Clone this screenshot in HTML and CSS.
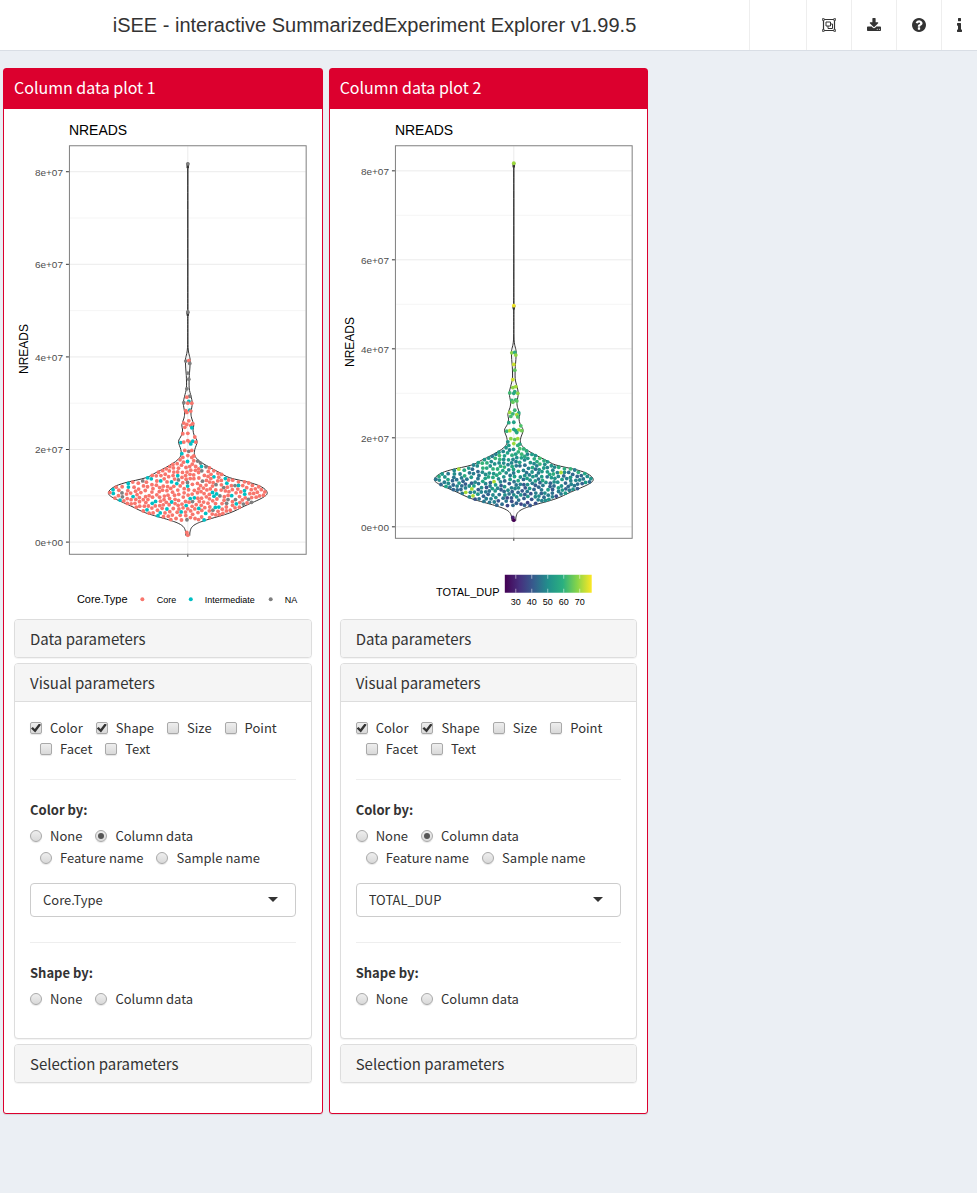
FILE: index.html
```html
<!DOCTYPE html>
<html lang="en">
<head>
<meta charset="utf-8">
<title>iSEE</title>
<link rel="stylesheet" href="styles.css">
</head>
<body>
<header class="topbar">
  <h1 class="brand">iSEE - interactive SummarizedExperiment Explorer v1.99.5</h1>
  <nav class="tools">
    <span class="tool-blank"></span>
    <button class="tool" type="button" aria-label="Organize panels">
      <svg width="14" height="14" viewBox="0 0 14 14" fill="none" stroke="currentColor"><path stroke-width="1.2" d="M1.5 1.5h11v11h-11z"/><path d="M4 4h4.500v4H4zM8.500 6H10.500v4.500H6V8"/><path fill="#fff" stroke-width=".8" d="M.4.6h1.800v1.800H.4zM11.800.6h1.800v1.800h-1.800zM.4 11.600h1.800v1.800H.4zM11.800 11.600h1.800v1.800h-1.800z"/></svg>
    </button>
    <button class="tool" type="button" aria-label="Download">
      <svg width="14" height="14" viewBox="64 0 1664 1664" fill="currentColor"><path d="M1344 1344q0-26-19-45t-45-19-45 19-19 45 19 45 45 19 45-19 19-45zm256 0q0-26-19-45t-45-19-45 19-19 45 19 45 45 19 45-19 19-45zm128-224v320q0 40-28 68t-68 28h-1472q-40 0-68-28t-28-68v-320q0-40 28-68t68-28h465l135 136q58 56 136 56t136-56l136-136h464q40 0 68 28t28 68zm-325-569q17 41-14 70l-448 448q-18 19-45 19t-45-19l-448-448q-31-29-14-70 17-39 59-39h256v-448q0-26 19-45t45-19h256q26 0 45 19t19 45v448h256q42 0 59 39z"/></svg>
    </button>
    <button class="tool" type="button" aria-label="Help">
      <svg width="14" height="14" viewBox="0 128 1536 1536" fill="currentColor"><path d="M896 1376v-192q0-14-9-23t-23-9h-192q-14 0-23 9t-9 23v192q0 14 9 23t23 9h192q14 0 23-9t9-23zm256-672q0-88-55.5-163t-138.5-116-170-41q-243 0-371 213-15 24 8 42l132 100q7 6 19 6 16 0 25-12 53-68 86-92 34-24 86-24 48 0 85.5 26t37.5 59q0 38-20 61t-68 45q-63 28-115.5 86.5t-52.5 125.5v36q0 14 9 23t23 9h192q14 0 23-9t9-23q0-19 21.5-49.5t54.5-49.5q32-18 49-28.5t46-35 44.5-48 28-60.5 12.5-81zm384 192q0 209-103 385.5t-279.5 279.5-385.5 103-385.5-103-279.5-279.5-103-385.5 103-385.5 279.5-279.5 385.5-103 385.5 103 279.5 279.5 103 385.5z"/></svg>
    </button>
    <button class="tool" type="button" aria-label="Information">
      <svg width="5" height="14" viewBox="576 128 640 1408" preserveAspectRatio="none" fill="currentColor"><path d="M1216 1344v128q0 26-19 45t-45 19h-512q-26 0-45-19t-19-45v-128q0-26 19-45t45-19h64v-384h-64q-26 0-45-19t-19-45v-128q0-26 19-45t45-19h384q26 0 45 19t19 45v576h64q26 0 45 19t19 45zm-128-1152v192q0 26-19 45t-45 19h-256q-26 0-45-19t-19-45v-192q0-26 19-45t45-19h256q26 0 45 19t19 45z"/></svg>
    </button>
  </nav>
</header>

<main class="board">
  <section class="col">
    <div class="box">
      <h2 class="box-title">Column data plot 1</h2>
      <div class="box-body">
        <svg class="plot" id="plot1" viewBox="0 0 298 500" role="img" aria-label="NREADS violin plot by Core.Type">
          <g class="canvas"></g>
          <text class="legend-title" x="63" y="484">Core.Type</text>
          <circle cx="128.500" cy="480.500" r="2" fill="#f8766d"/><text class="legend-label" x="143" y="484">Core</text>
          <circle cx="177" cy="480.500" r="2" fill="#00bfc4"/><text class="legend-label" x="191" y="484">Intermediate</text>
          <circle cx="257" cy="480.500" r="2" fill="#7f7f7f"/><text class="legend-label" x="271" y="484">NA</text>
        </svg>

        <div class="panel"><button class="panel-head" type="button">Data parameters</button></div>
        <div class="panel open">
          <button class="panel-head" type="button">Visual parameters</button>
          <div class="panel-body">
            <div class="choices checks">
              <label class="choice"><input type="checkbox" checked>Color</label>
              <label class="choice"><input type="checkbox" checked>Shape</label>
              <label class="choice"><input type="checkbox">Size</label>
              <label class="choice"><input type="checkbox">Point</label>
              <label class="choice"><input type="checkbox">Facet</label>
              <label class="choice"><input type="checkbox">Text</label>
            </div>
            <hr class="rule">
            <fieldset class="group">
              <legend class="group-label">Color by:</legend>
              <div class="choices">
                <label class="choice"><input type="radio" name="color1">None</label>
                <label class="choice"><input type="radio" name="color1" checked>Column data</label>
                <label class="choice"><input type="radio" name="color1">Feature name</label>
                <label class="choice"><input type="radio" name="color1">Sample name</label>
              </div>
            </fieldset>
            <div class="picker"><select aria-label="Color column"><option>Core.Type</option><option>TOTAL_DUP</option></select></div>
            <hr class="rule">
            <fieldset class="group">
              <legend class="group-label">Shape by:</legend>
              <div class="choices">
                <label class="choice"><input type="radio" name="shape1">None</label>
                <label class="choice"><input type="radio" name="shape1">Column data</label>
              </div>
            </fieldset>
          </div>
        </div>
        <div class="panel"><button class="panel-head" type="button">Selection parameters</button></div>
      </div>
    </div>
  </section>

  <section class="col">
    <div class="box">
      <h2 class="box-title">Column data plot 2</h2>
      <div class="box-body">
        <svg class="plot" id="plot2" viewBox="0 0 298 500" role="img" aria-label="NREADS violin plot by TOTAL_DUP">
          <defs>
            <linearGradient id="viridis">
              <stop offset="0" stop-color="#440154"/><stop offset=".17" stop-color="#46307e"/><stop offset=".33" stop-color="#365c8d"/><stop offset=".5" stop-color="#21908c"/><stop offset=".67" stop-color="#2bb07f"/><stop offset=".83" stop-color="#85d44a"/><stop offset="1" stop-color="#fde725"/>
            </linearGradient>
          </defs>
          <g class="canvas"></g>
          <text class="legend-title" x="96" y="477">TOTAL_DUP</text>
          <rect x="165" y="456" width="87" height="18" fill="url(#viridis)"/>
          <path class="legend-ticks" d="M176 456v4M192 456v4M208 456v4M224 456v4M240 456v4M176 470v4M192 470v4M208 470v4M224 470v4M240 470v4"/>
          <text class="legend-label mid" x="176" y="486">30</text>
          <text class="legend-label mid" x="192" y="486">40</text>
          <text class="legend-label mid" x="208" y="486">50</text>
          <text class="legend-label mid" x="224" y="486">60</text>
          <text class="legend-label mid" x="240" y="486">70</text>
        </svg>

        <div class="panel"><button class="panel-head" type="button">Data parameters</button></div>
        <div class="panel open">
          <button class="panel-head" type="button">Visual parameters</button>
          <div class="panel-body">
            <div class="choices checks">
              <label class="choice"><input type="checkbox" checked>Color</label>
              <label class="choice"><input type="checkbox" checked>Shape</label>
              <label class="choice"><input type="checkbox">Size</label>
              <label class="choice"><input type="checkbox">Point</label>
              <label class="choice"><input type="checkbox">Facet</label>
              <label class="choice"><input type="checkbox">Text</label>
            </div>
            <hr class="rule">
            <fieldset class="group">
              <legend class="group-label">Color by:</legend>
              <div class="choices">
                <label class="choice"><input type="radio" name="color2">None</label>
                <label class="choice"><input type="radio" name="color2" checked>Column data</label>
                <label class="choice"><input type="radio" name="color2">Feature name</label>
                <label class="choice"><input type="radio" name="color2">Sample name</label>
              </div>
            </fieldset>
            <div class="picker"><select aria-label="Color column"><option>TOTAL_DUP</option><option>Core.Type</option></select></div>
            <hr class="rule">
            <fieldset class="group">
              <legend class="group-label">Shape by:</legend>
              <div class="choices">
                <label class="choice"><input type="radio" name="shape2">None</label>
                <label class="choice"><input type="radio" name="shape2">Column data</label>
              </div>
            </fieldset>
          </div>
        </div>
        <div class="panel"><button class="panel-head" type="button">Selection parameters</button></div>
      </div>
    </div>
  </section>
</main>
<script src="plots.js"></script>
</body>
</html>
```

FILE: styles.css
```css
* { box-sizing: border-box; }

body {
  margin: 0;
  min-height: 100vh;
  background: #ebeff4;
  color: #333;
  font-family: "Noto Sans CJK SC", "Noto Sans", sans-serif;
  font-size: 13px;
  line-height: 20px;
}

button, select { font: inherit; color: inherit; }

.topbar {
  display: flex;
  height: 51px;
  background: #fff;
  border-bottom: 1px solid #d9dee5;
}
.brand {
  flex: 1;
  margin: 0;
  font: 400 20px/50px "Liberation Sans", Arial, sans-serif;
  text-align: center;
}
.tools { display: flex; }
.tool-blank { width: 57px; border-left: 1px solid #eee; }
.tool {
  display: flex;
  align-items: center;
  padding: 0 15px;
  border: 0;
  border-left: 1px solid #eee;
  background: none;
}

.board { display: flex; padding-top: 17px; }
.col { flex: 0 0 33.3333%; padding: 0 3px; }
.box {
  border: 1px solid #dc002e;
  border-radius: 3px;
  background: #fff;
  box-shadow: 0 1px 1px rgba(0, 0, 0, .1);
}
.box-title {
  margin: 0;
  padding: 8px 10px 12px;
  background: #dc002e;
  color: #fff;
  font-size: 16px;
  font-weight: 400;
  line-height: 20px;
}
.box-body { padding: 10px 10px 30px; }

.plot { display: block; width: 100%; height: 500px; }
.plot text { font-family: "Liberation Sans", Arial, sans-serif; fill: #000; }
.plot .plot-title { font-size: 14px; }
.plot .axis-title { font-size: 12px; text-anchor: middle; }
.plot .tick-label { font-size: 10px; text-anchor: end; fill: #4d4d4d; }
.plot .legend-title { font-size: 11px; }
.plot .legend-label { font-size: 9px; }
.plot .mid { text-anchor: middle; }
.legend-ticks { stroke: #fff; stroke-opacity: .5; }
.grid { stroke: #ebebeb; }
.grid.minor { stroke: #f5f5f5; }
.frame { fill: none; stroke: #7f7f7f; }
.tick { stroke: #333; }
.violin { fill: none; stroke: #333; }

.panel {
  border: 1px solid #ddd;
  border-radius: 4px;
  background: #fff;
  box-shadow: 0 1px 1px rgba(0, 0, 0, .05);
}
.panel + .panel { margin-top: 5px; }
.panel-head {
  display: block;
  width: 100%;
  padding: 9px 15px;
  border: 0;
  border-radius: 3px;
  background: #f5f5f5;
  font-size: 15px;
  line-height: 19px;
  text-align: left;
}
.panel.open .panel-head { border-bottom: 1px solid #ddd; border-radius: 3px 3px 0 0; }
.panel-body { padding: 16px 15px 29px; }

.choices { display: flex; flex-wrap: wrap; column-gap: 3px; row-gap: 2px; }
.checks { row-gap: 1px; padding-bottom: 1px; }
.choice { display: flex; align-items: center; gap: 8px; margin-left: 10px; }
.choice:first-child { margin-left: 0; }
.choice input {
  appearance: none;
  display: grid;
  place-items: center;
  width: 12px;
  height: 12px;
  margin: 0;
  border: 1px solid #a9a9a9;
  border-radius: 2px;
  background: linear-gradient(#eee, #d9d9d9);
  box-shadow: 0 1px 1px rgba(0, 0, 0, .1);
}
.choice input[type="radio"] { border-radius: 50%; }
.choice input[type="radio"]:checked::before {
  content: "";
  width: 6px;
  height: 6px;
  border-radius: 50%;
  background: #555;
}
.choice input[type="checkbox"]:checked::before {
  content: "";
  width: 10px;
  height: 9px;
  background: #333;
  clip-path: polygon(0 55%, 18% 38%, 38% 60%, 80% 0, 100% 14%, 42% 100%);
}

.rule { margin: 19px 0 20px; border: 0; border-top: 1px solid #eee; }
.group { margin: 0; padding: 0; border: 0; }
.group-label { padding: 0 0 6px; font-weight: 700; }

.picker { position: relative; margin: 15px 0 25px; }
.picker::after {
  content: "";
  position: absolute;
  top: 14px;
  right: 18px;
  border: 5px solid transparent;
  border-top-color: #333;
  border-bottom: 0;
  pointer-events: none;
}
.picker select {
  appearance: none;
  display: block;
  width: 100%;
  height: 34px;
  padding: 0 12px;
  border: 1px solid #ccc;
  border-radius: 4px;
  background: #fff;
}
```

FILE: plots.js
```js
const CENTER = 174;

// Violin outline: [NREADS / 1e7, half width]
const OUTLINE = [
  [8.18, 1], [8.08, .6], [7.95, .1], [5.15, .1], [4.97, 1], [4.83, .1], [4.2, .3], [3.92, 2.4], [3.6, 1.5],
  [3.33, 1.4], [3.15, 3.2], [3.0, 4.5], [2.8, 3.2], [2.68, 3.8], [2.53, 6], [2.42, 5.2], [2.3, 6.5],
  [2.17, 9.3], [2.0, 7], [1.88, 6.8], [1.78, 10], [1.7, 15], [1.6, 23], [1.5, 32], [1.39, 42], [1.28, 63],
  [1.19, 74], [1.07, 79.5], [0.96, 75], [0.78, 57], [0.63, 42], [0.48, 19], [0.4, 9], [0.32, 4], [0.22, 2.2], [0.14, 2]
];

// Sparse samples: [offset, NREADS / 1e7, core type, duplication]
const SPARSE = [
  [0, 8.17, "N", .85], [0, 4.97, "N", .98], [-2, 3.91, "N", .82], [1, 3.92, "C", .62], [2, 3.86, "N", .83],
  [0, 3.65, "N", .92], [1, 3.52, "N", .75], [-1, 3.31, "N", .93], [2, 3.15, "N", .86], [-1, 3.13, "C", .82],
  [-4, 3.01, "N", .68], [1, 3.04, "I", .62], [0, 3, "C", .6], [4, 3, "C", .82], [-2, 2.84, "C", .65],
  [2, 2.85, "I", .64], [-1, 2.8, "C", .76], [3, 2.83, "C", .74], [1, 2.62, "C", .66], [-4, 2.57, "C", .85],
  [-1, 2.54, "C", .65], [5, 2.56, "C", .6], [3, 2.52, "C", .87], [-3, 2.48, "C", .7], [4, 2.47, "I", .72],
  [-5, 2.34, "C", .6], [0, 2.35, "C", .57], [7, 2.27, "C", .72], [-7, 2.15, "I", .65], [-4, 2.16, "C", .88],
  [0, 2.19, "C", .58], [2, 2.16, "C", .56], [5, 2.18, "I", .85], [8, 2.16, "C", .78], [3, 2.12, "I", .6],
  [-3, 1.98, "C", .82], [1, 1.96, "N", .75], [4, 1.98, "C", .86], [-6, 1.91, "I", .52], [0, 1.87, "C", .85],
  [6, 1.86, "C", .6], [4, 1.83, "C", .63], [-5, 1.83, "C", .55], [-1, .21, "C", .1], [0, .15, "C", 0]
];

const TYPE_COLORS = { C: "#f8766d", I: "#00bfc4", N: "#7f7f7f" };
const VIRIDIS = [[68, 1, 84], [70, 48, 126], [54, 92, 141], [39, 127, 142], [31, 161, 135], [74, 193, 109], [160, 218, 57], [253, 231, 37]];

function viridis(t) {
  const p = Math.max(0, Math.min(.999, t)) * (VIRIDIS.length - 1);
  const i = Math.floor(p);
  return "rgb(" + VIRIDIS[i].map((c, k) => Math.round(c + (VIRIDIS[i + 1][k] - c) * (p - i))).join(",") + ")";
}

function randomizer(seed) {
  return () => {
    seed = (seed * 1664525 + 1013904223) >>> 0;
    return seed / 4294967296;
  };
}

function halfWidth(v) {
  for (let i = 1; i < OUTLINE.length; i++) {
    const [v1, w1] = OUTLINE[i - 1], [v2, w2] = OUTLINE[i];
    if (v <= v1 && v >= v2) return w1 + (w2 - w1) * (v1 - v) / (v1 - v2);
  }
  return 0;
}

// Scatter the dense part of the sample evenly within the outline
function samples() {
  const rand = randomizer(20190);
  const list = SPARSE.slice();
  for (let tries = 0; tries < 40000; tries++) {
    const v = .46 + rand() * 1.36;
    const dx = (rand() * 2 - 1) * 79;
    if (Math.abs(dx) > halfWidth(v) - 1) continue;
    if (list.some(s => Math.hypot(s[0] - dx, (s[1] - v) * 46) < 3.5)) continue;
    const r = rand();
    const type = r < .77 ? "C" : r < .92 ? "I" : "N";
    let t = .4 + (v - .8) * .2 + (rand() - .5) * .3;
    if (rand() < .012) t = .87;
    list.push([dx, v, type, t]);
  }
  return list;
}

function smooth(p) {
  let d = "M" + p[0].join(" ");
  for (let i = 0; i < p.length - 1; i++) {
    const a = p[Math.max(0, i - 1)], b = p[i], c = p[i + 1], e = p[Math.min(p.length - 1, i + 2)];
    d += `C${b[0] + (c[0] - a[0]) / 6} ${b[1] + (c[1] - a[1]) / 6} ${c[0] - (e[0] - b[0]) / 6} ${c[1] - (e[1] - b[1]) / 6} ${c[0]} ${c[1]}`;
  }
  return d;
}

function draw(id, zero, unit, bottom, labelY, color) {
  const y = v => zero - v * unit;
  let out = `<text class="plot-title" x="55" y="16">NREADS</text>`;
  out += `<text class="axis-title" transform="translate(14 ${labelY}) rotate(-90)">NREADS</text>`;
  for (let v = 1; v < 8; v += 2) out += `<path class="grid minor" d="M56 ${y(v)}H292"/>`;
  for (let v = 0; v <= 8; v += 2) {
    out += `<path class="grid" d="M56 ${y(v)}H292"/><path class="tick" d="M52 ${y(v)}h3"/>`;
    out += `<text class="tick-label" x="49" y="${y(v) + 4}">${v}e+0${v ? 7 : 0}</text>`;
  }
  out += `<path class="grid" d="M${CENTER} 27V${bottom}"/><path class="tick" d="M${CENTER} ${bottom}v3"/>`;
  const side = s => OUTLINE.map(([v, w]) => [CENTER + s * w, y(v)]);
  out += `<path class="violin" d="${smooth(side(-1))}${smooth(side(1))}"/>`;
  for (const s of samples()) out += `<circle cx="${CENTER + s[0]}" cy="${y(s[1])}" r="1.9" fill="${color(s)}"/>`;
  out += `<rect class="frame" x="55.5" y="26.5" width="237" height="${bottom - 26}"/>`;
  document.querySelector(`#${id} .canvas`).innerHTML = out;
}

draw("plot1", 423.3, 46.35, 435, 230, s => TYPE_COLORS[s[2]]);
draw("plot2", 408, 44.55, 419, 223, s => viridis(s[3]));
```
